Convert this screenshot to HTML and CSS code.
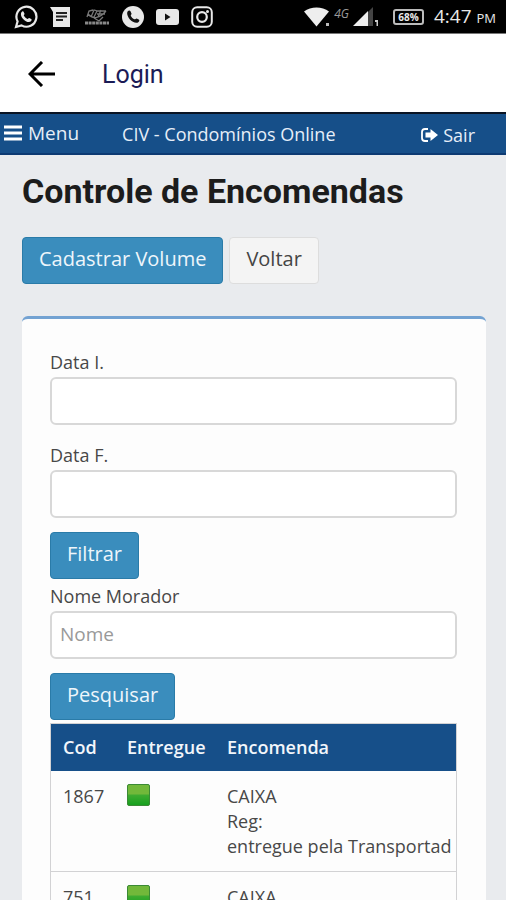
FILE: index.html
```html
<!DOCTYPE html>
<html lang="pt-BR">
<head>
<meta charset="utf-8">
<meta name="viewport" content="width=device-width, initial-scale=1">
<title>Controle de Encomendas</title>
<link rel="stylesheet" href="styles.css">
</head>
<body>
<div class="status">
  <div class="status-icons">
    <svg width="24" height="24" viewBox="0 0 24 24"><path d="M2 22l1.600-5.600A10 10 0 1 1 7.500 20.400z" fill="none" stroke="#e8e8e8" stroke-width="2.200"/><path d="M8.200 6.500c.7-.5 1.200-.3 1.500.4l.8 1.800c.2.600-.9 1.400-.7 1.900.8 1.600 2 2.700 3.600 3.400.5.200 1.300-1.100 1.800-.9l2 1c.8.400.5 1.500-.2 2.200-1.300 1.200-3.200 1-5.100-.1-2-1.100-3.800-3-4.600-5-.7-2-.4-3.700.9-4.700z" fill="#e8e8e8"/></svg>
    <svg width="22" height="22" viewBox="0 0 22 22"><path d="M0 1h20v20H3V6z" fill="#e8e8e8"/><path d="M6 7h11M6 10.500h11M6 14h7" stroke="#222" stroke-width="1.800"/></svg>
    <svg class="brand" width="26" height="18" viewBox="0 0 26 18"><path d="M3 9l2-6 4-1M7 9l3-7 3 1-3 6M12 3h10M13 6h8M17 2l-3 7M4 6c5 6 12 4 18-3M10 10l5 3 4-4" fill="none" stroke="#777" stroke-width="1.300"/><path d="M1 15h24" stroke="#888" stroke-width="3" stroke-dasharray="3 .6"/></svg>
    <svg width="22" height="22" viewBox="0 0 22 22"><circle cx="11" cy="11" r="11" fill="#e8e8e8"/><path d="M6 5c1-1 2-.7 2.500.3l1 2.200c.3.800-1 1.600-.7 2.200.9 1.700 2 2.800 3.700 3.600.6.300 1.500-1.100 2.200-.8l2 1c1 .6.700 1.700-.1 2.400-1.500 1.400-3.600 1-5.700-.2-2.300-1.300-4-3.200-5-5.500C5 8 4.800 6.200 6 5z" fill="#111"/></svg>
    <svg width="23" height="18" viewBox="0 0 23 18"><rect y="1" width="23" height="16" rx="3" fill="#e8e8e8"/><path d="M9 5.500v7l5.500-3.500z" fill="#111"/></svg>
    <svg width="22" height="22" viewBox="0 0 22 22"><rect x="1.200" y="1.200" width="19.600" height="19.600" rx="5" fill="none" stroke="#e8e8e8" stroke-width="2"/><circle cx="11" cy="11" r="4.800" fill="none" stroke="#e8e8e8" stroke-width="2.200"/><circle cx="16.500" cy="5.500" r="1.500" fill="#e8e8e8"/></svg>
  </div>
  <div class="status-info">
    <svg width="26" height="20" viewBox="0 0 26 20"><path d="M0 4.500C7-.8 18-.8 25 4.500L12.500 19.500z" fill="#eee"/><path d="M22 16h3v3h-3z" fill="#bbb"/></svg>
    <span class="net">4G</span>
    <svg class="signal" width="26" height="20" viewBox="0 0 26 20"><path d="M15 5l5-5v19h-5z" fill="#444"/><path d="M0 19L15 4v15z" fill="#eee"/><path d="M22 13h3v6h-1.500v-4H22z" fill="#ccc"/></svg>
    <span class="battery">68%</span>
    <span class="clock">4:47 <small>PM</small></span>
  </div>
</div>
<header class="appbar">
  <button class="back" type="button" aria-label="Voltar"><svg width="28" height="26" viewBox="0 0 28 26"><path d="M27 13H2M14 1L2 13l12 12" fill="none" stroke="#000" stroke-width="3"/></svg></button>
  <span class="appbar-title">Login</span>
</header>
<nav class="nav">
  <a class="menu" href="#"><svg width="18" height="16" viewBox="0 0 18 16"><path d="M0 2h18M0 8h18M0 14h18" stroke="#fff" stroke-width="3"/></svg>Menu</a>
  <span class="site">CIV - Condomínios Online</span>
  <a class="exit" href="#"><svg width="17" height="14" viewBox="0 0 17 14"><path d="M7 1H4Q1 1 1 4v6q0 3 3 3h3" fill="none" stroke="#fff" stroke-width="1.800"/><path d="M4.500 4.500h5V1L17 7l-7.500 6V9.500h-5z" fill="#fff"/></svg>Sair</a>
</nav>
<main class="content">
  <h1>Controle de Encomendas</h1>
  <div class="actions">
    <button class="btn primary" type="button">Cadastrar Volume</button>
    <button class="btn plain" type="button">Voltar</button>
  </div>
  <section class="card">
    <form>
      <div class="field"><label for="di">Data I.</label><input id="di" type="text"></div>
      <div class="field last"><label for="df">Data F.</label><input id="df" type="text"></div>
      <button class="btn primary" type="button">Filtrar</button>
    </form>
    <form class="search">
      <div class="field last"><label for="nome">Nome Morador</label><input id="nome" type="text" placeholder="Nome"></div>
      <button class="btn primary" type="button">Pesquisar</button>
    </form>
    <div class="table-wrap">
      <table>
        <thead><tr><th class="cod">Cod</th><th class="done">Entregue</th><th>Encomenda</th></tr></thead>
        <tbody>
          <tr><td>1867</td><td><span class="flag" role="img" aria-label="Sim"></span></td><td>CAIXA<br>Reg:<br>entregue pela Transportad</td></tr>
          <tr><td>751</td><td><span class="flag" role="img" aria-label="Sim"></span></td><td>CAIXA</td></tr>
        </tbody>
      </table>
    </div>
  </section>
</main>
</body>
</html>
```
FILE: styles.css
```css
* { box-sizing: border-box; }
body {
  margin: 0;
  height: 100vh;
  display: flex;
  flex-direction: column;
  overflow: hidden;
  background: #e9ebee;
  color: #484848;
  font: 18px/24px "Open Sans", "Noto Sans", sans-serif;
}
a { color: inherit; text-decoration: none; }
button, input { font: inherit; }
svg { display: block; flex: none; }

.status {
  flex: none;
  height: 34px;
  padding: 0 10px 0 14px;
  display: flex;
  align-items: center;
  justify-content: space-between;
  background: #000;
  color: #e8e8e8;
  border-bottom: 1px solid #777;
}
.status-icons { display: flex; align-items: center; gap: 12px; }
.status-info { display: flex; align-items: center; gap: 4px; }
.net { font-size: 12px; font-style: italic; line-height: 20px; color: #999; align-self: flex-start; }
.battery {
  margin: 0 6px 0 10px;
  width: 31px;
  height: 16px;
  border: 2px solid #bbb;
  border-radius: 3px;
  font-size: 10px;
  font-weight: 700;
  line-height: 12px;
  text-align: center;
}
.clock { font-size: 19px; white-space: nowrap; }
.clock small { font-size: 13px; }

.appbar {
  flex: none;
  height: 78px;
  padding: 2px 28px 0;
  display: flex;
  align-items: center;
  gap: 46px;
  background: #fff;
}
.back { padding: 0; border: 0; background: none; }
.appbar-title { font: 25px/30px Roboto, sans-serif; color: #1b1b56; padding-top: 2px; }

.nav {
  flex: none;
  height: 43px;
  padding: 0 31px 0 4px;
  display: flex;
  align-items: center;
  background: #164f89;
  border-top: 2px solid #0a1424;
  border-bottom: 2px solid #0d3a72;
  color: #e6eef8;
}
.menu { display: flex; align-items: center; gap: 6px; font-size: 19px; padding-bottom: 2px; }
.site { margin-left: 43px; }
.exit { margin-left: auto; display: flex; align-items: center; gap: 5px; padding-top: 2px; }

.content { flex: 1; min-height: 0; padding: 16px 20px 0 22px; overflow: hidden; }
h1 { margin: 0 0 26px; font: 700 34px/40px Roboto, sans-serif; color: #1c1c1c; }
.actions { display: flex; gap: 6px; margin-bottom: 32px; }
.btn {
  display: block;
  height: 47px;
  padding: 0 16px 3px;
  border: 1px solid #2a7ba8;
  border-radius: 4px;
  font-size: 20px;
}
.primary { background: #3a8dbd; color: #eef6fb; }
.plain { background: #f4f4f4; border-color: #ddd; color: #444; }

.card {
  padding: 31px 29px 28px 28px;
  background: #fdfdfd;
  border-top: 3px solid #73a2d2;
  border-radius: 6px;
}
.field { margin-bottom: 18px; }
.field.last { margin-bottom: 14px; }
label { display: block; margin-bottom: 3px; }
input {
  display: block;
  width: 100%;
  height: 48px;
  padding: 0 8px 3px;
  border: 2px solid #d8d8d8;
  border-radius: 6px;
  background: #fff;
}
input::placeholder { color: #999; opacity: 1; }
#nome { font-size: 19px; }
.search { margin: 5px 0 3px; }

.table-wrap { overflow: hidden; border: 1px solid #d2d2d4; }
table { width: 100%; border-collapse: collapse; line-height: 25px; }
th, td { padding: 13px 0 12px 12px; text-align: left; vertical-align: top; white-space: nowrap; }
th { padding: 11px 0 11px 12px; background: #164f89; color: #f2f6fb; font-weight: 600; }
td { border-bottom: 1px solid #d2d2d4; }
.cod { width: 64px; }
.done { width: 100px; }
.flag {
  display: block;
  width: 23px;
  height: 22px;
  border: 1px solid #3b8a35;
  border-radius: 2px;
  background: linear-gradient(#72b83a 45%, #3fac31 50%, #17a01f);
}
```
